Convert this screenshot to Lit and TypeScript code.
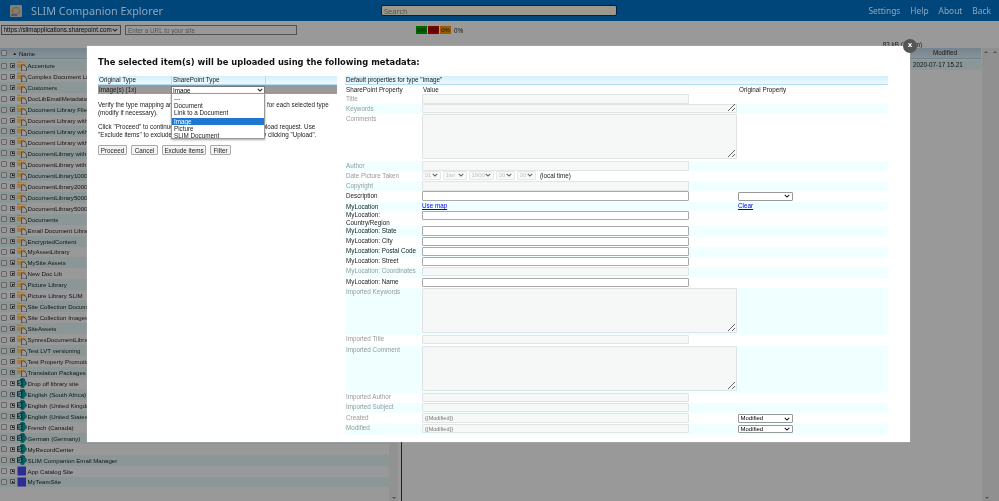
import { LitElement, html, css, svg } from "lit";
import { customElement } from "lit/decorators.js";

const FOLDERS = ["Accenture","Complex Document Library","Customers","DocLibEmailMetadata","Document Library File","Document Library with","Document Library with","Document Library with","DocumentLibrary with","DocumentLibrary with","DocumentLibrary1000","DocumentLibrary2000","DocumentLibrary5000","DocumentLibrary5000","Documents","Email Document Library","EncryptedContent","MyAssetLibrary","MySite Assets","New Doc Lib","Picture Library","Picture Library SLIM","Site Collection Documents","Site Collection Images","SiteAssets","SynresDocumentLibrary","Test LVT versioning","Test Property Promotion","Translation Packages"];
const SITES = ["Drop off library site","English (South Africa)","English (United Kingdom)","English (United States)","French (Canada)","German (Germany)","MyRecordCenter","SLIM Companion Email Manager"];
const BLUE = ["App Catalog Site","MyTeamSite"];

type Row = { l: string; h: number; k?: string; off?: boolean; orig?: string; v?: string; ih?: number };
const ROWS: Row[] = [
  { l: "Title", h: 10, k: "input", off: true },
  { l: "Keywords", h: 10, k: "area", off: true, ih: 9 },
  { l: "Comments", h: 47, k: "area", off: true, ih: 45 },
  { l: "Author", h: 10, k: "input", off: true },
  { l: "Date Picture Taken", h: 10, k: "date", off: true },
  { l: "Copyright", h: 10, k: "input", off: true },
  { l: "Description", h: 11, k: "input", orig: "" },
  { l: "MyLocation", h: 8.5, k: "map" },
  { l: "MyLocation:\nCountry/Region", h: 15.5, k: "input" },
  { l: "MyLocation: State", h: 10.5, k: "input" },
  { l: "MyLocation: City", h: 10.2, k: "input" },
  { l: "MyLocation: Postal Code", h: 10.3, k: "input" },
  { l: "MyLocation: Street", h: 10, k: "input" },
  { l: "MyLocation: Coordinates", h: 11, k: "input", off: true },
  { l: "MyLocation: Name", h: 10, k: "input" },
  { l: "Imported Keywords", h: 47, k: "area", off: true, ih: 45 },
  { l: "Imported Title", h: 11, k: "input", off: true },
  { l: "Imported Comment", h: 47, k: "area", off: true, ih: 45 },
  { l: "Imported Author", h: 10, k: "input", off: true },
  { l: "Imported Subject", h: 10.5, k: "input", off: true },
  { l: "Created", h: 10.5, k: "input", off: true, v: "{{Modified}}", orig: "Modified" },
  { l: "Modified", h: 11, k: "input", off: true, v: "{{Modified}}", orig: "Modified" },
];

const folderIcon = svg`<svg class="ico" viewBox="0 0 10 10"><path d="M0 .5h3.500l1 1H9V7H0z" fill="#a57c42"/><path d="M0 2.500h9" stroke="#b09a6c" stroke-width=".8"/><path d="M4.500 4H7l2.500 2.500V10h-5z" fill="#999" stroke="#333" stroke-width=".7"/></svg>`;
const siteIcon = svg`<svg class="ico" viewBox="0 0 10 10"><circle cx="5.500" cy="2.800" r="2.800" fill="#075356"/><circle cx="7.300" cy="5.300" r="2.500" fill="#0b6365"/><circle cx="5.500" cy="7.700" r="2.300" fill="#095c5e"/><rect x="0" y="2.200" width="5.500" height="5.600" fill="#023d40"/><text x="2.700" y="6.700" font-size="5" font-family="Liberation Sans" font-weight="700" text-anchor="middle" fill="#999">S</text></svg>`;
const blueIcon = svg`<svg class="ico" viewBox="0 0 10 10"><rect x=".5" y=".5" width="8.500" height="9" fill="#2d2d95"/></svg>`;

@customElement("app-root")
export class AppRoot extends LitElement {
  static styles = css`
    :host { display: block; position: relative; width: 999px; height: 501px; overflow: hidden; background: #999;
      font-family: "Liberation Sans", sans-serif; font-size: 6.300px; color: #222; }
    * { box-sizing: border-box; }
    select { appearance: none; line-height: 1; padding: 0 0 1px 1.500px;
      background: #fff url("data:image/svg+xml,%3Csvg xmlns='http://www.w3.org/2000/svg' viewBox='0 0 8 5'%3E%3Cpath d='M1 1l3 3 3-3' fill='none' stroke='%23222' stroke-width='1.400'/%3E%3C/svg%3E") no-repeat right 2px center / 6px 4px; }
    .page { height: 501px; background: #999; color: #141414; filter: blur(.25px); }
    .top { height: 21px; background: #00467a; display: flex; align-items: center; color: #8ea7bc; padding: 0 8px 0 10px; font-family: "Noto Sans", sans-serif; }
    .logo { width: 12px; height: 12px; margin-right: 9px; }
    .brand { font-size: 10.800px; width: 350px; }
    .search { width: 236px; height: 11px; background: #9c988c; border: 1px solid #002340; border-radius: 2px; font: inherit; font-size: 7.500px; padding: 0 2px; }
    .search::placeholder { color: #555; }
    .links { margin-left: auto; display: flex; gap: 10px; font-size: 8.400px; }
    .tools { height: 20px; display: flex; align-items: center; padding: 0 0 2px 1px; }
    .tools select { width: 120px; height: 10px; font: inherit; border: 1px solid #474747; color: #0a0a0a; background-color: #999; }
    .tools input { width: 172px; height: 10px; margin-left: 4px; font: inherit; padding: 0 2px; border: 1px solid #525252; background: #999; }
    .tools input::placeholder { color: #555; }
    .bars { margin-left: 119px; display: flex; gap: 1px; align-items: center; }
    .bar { width: 11px; height: 8px; text-align: center; line-height: 8px; font-size: 6px; color: #141414; }
    .g { background: #006600; } .r { background: #7d0000; } .o { background: #995c00; }
    .pct { margin-left: 2px; }
    .size { height: 7px; line-height: 7px; text-align: right; padding-right: 77px; }
    .panes { display: flex; height: 453px; }
    .tree { width: 389px; font-size: 6.100px; }
    .thead { height: 11px; display: flex; align-items: center; background: linear-gradient(#76848e, #899296); border-bottom: 1px solid #6e8290; }
    .rows { padding-top: 1.300px; }
    .row { height: 10.955px; display: flex; align-items: center; white-space: nowrap; }
    .row:nth-child(odd) { background: #8b9696; }
    .cb { width: 6px; height: 6px; margin-left: 1px; border: 1px solid #666; border-radius: 1px; background: #999; flex: none; }
    .exp { width: 5px; height: 5px; margin-left: 3px; border: 1px solid #525252; position: relative; flex: none; background: #999; }
    .exp::before { content: ""; position: absolute; left: .5px; right: .5px; top: 1.100px; height: 1px; background: #1f1f1f; }
    .exp::after { content: ""; position: absolute; top: .5px; bottom: .5px; left: 1.100px; width: 1px; background: #1f1f1f; }
    .ico { width: 10px; height: 10px; margin: 0 .5px 0 2px; flex: none; }
    .sort { margin: 0 2px 0 5.500px; font-size: 4.500px; }
    .scroll { width: 9px; background: #929292; position: relative; }
    .arrow { position: absolute; bottom: 2px; left: 3px; width: 0; height: 0; border: 2px solid transparent; border-top-color: #525252; border-bottom: 0; }
    .split { width: 4px; border-right: 1.500px solid #1f1f1f; }
    .main { flex: 1; }
    .mhead { margin-left: 507px; width: 72px; height: 11px; background: linear-gradient(#76848e, #899296); border-bottom: 1px solid #6e8290; text-align: center; line-height: 10px; }
    .mrow { margin: 1.300px 0 0 507px; width: 72px; height: 10px; background: #8b9696; padding-left: 4px; line-height: 10px; }
    .side { width: 17px; background: #909090; position: relative; }
    .up { position: absolute; top: 3px; width: 0; height: 0; border: 2px solid transparent; border-bottom-color: #525252; border-top: 0; }
    .modal { position: absolute; left: 87px; top: 45.500px; width: 823px; height: 396px; background: #fff; box-shadow: 0 0 1px #ccc; padding: 11px 22px 0 11px; filter: blur(.25px); }
    h1 { margin: 0; font: 700 8.350px/11px "DejaVu Sans", sans-serif; height: 19.500px; white-space: nowrap; color: #111; }
    .close { position: absolute; right: -7px; top: -7px; width: 14px; height: 14px; border-radius: 50%; background: #555; color: #fff; font: 700 7px/13px "DejaVu Sans", sans-serif; text-align: center; }
    .cols { display: flex; gap: 8px; }
    .left { width: 239px; }
    .right { flex: 1; }
    .hd { height: 9px; line-height: 8px; background: linear-gradient(#d4effb, #ecf9fe); border-bottom: 1px solid #b4def6; padding-left: 1px; white-space: nowrap; }
    .lgrid { display: grid; grid-template-columns: 73px 94px 72px; }
    .lgrid .hd + .hd { border-left: 1px solid #b4def6; }
    .gray { background: #999; height: 9px; line-height: 9px; padding-left: 1px; display: flex; align-items: center; }
    .typecell { position: relative; padding-left: 0; }
    .typecell select { width: 94px; height: 8px; font: inherit; border: 0; padding: 0 0 0 2px; box-shadow: inset 0 0 0 1px #777; }
    .list { position: absolute; left: 0; top: 8px; width: 94px; height: 46px; background: #fff; border: 1px solid #999; box-shadow: 0 1px 2px #00000059; padding-top: .5px; color: #222; z-index: 2; }
    .opt { height: 7.400px; line-height: 7.400px; padding-left: 2px; white-space: nowrap; }
    .opt.sep { margin-bottom: 1px; }
    .opt.sel { background: #1e78d2; color: #fff; }
    .note { margin: 7px 0 6px; line-height: 8px; white-space: nowrap; }
    .note p { margin: 0 0 6px; }
    .btns { display: flex; gap: 4px; margin-top: 1px; }
    button { height: 10px; padding: 0; font: inherit; border: 1px solid #aaa; border-radius: 1px; background: #f4f4f4; color: #222; white-space: nowrap; }
    .b1 { width: 29px; } .b2 { width: 27px; } .b3 { width: 44px; } .b4 { width: 21px; }
    .phead { display: grid; grid-template-columns: 77px 316px 1fr; height: 9px; line-height: 9px; padding-left: 1px; }
    .prow { display: grid; grid-template-columns: 77px 316px 1fr; align-items: start; }
    .prow:nth-child(even) { background: #f0ffff; }
    .lab { padding-left: 1px; line-height: 7.500px; padding-top: .5px; white-space: pre; }
    .lab.off { color: #999; }
    .prow input { display: block; width: 267px; height: 9.500px; font: inherit; font-size: 5.500px; padding: 0 2px; border: 1px solid #aaa; background: #fff; border-radius: 1px; }
    .prow input:disabled { background: #f6f7f7; border-color: #e2e4e4; color: #777; }
    .prow textarea { display: block; width: 315px; padding: 0; border: 1px solid #e0e3e3; background: #f6f7f7; border-radius: 1px; }
    .prow select { width: 55px; height: 8.500px; font: inherit; font-size: 6px; border: 1px solid #999; border-radius: 1px; display: block; margin-top: 1px; }
    .date { display: flex; gap: 2px; align-items: center; }
    .date select { margin-top: 0; border-color: #ddd; color: #aaa; background-color: #f6f6f6; }
    .s1 { width: 19px !important; } .s2 { width: 24px !important; } .s3 { width: 25px !important; }
    .date span { margin-left: 2px; }
    a { color: #00e; text-decoration: underline; line-height: 8px; display: block; }
  `;

  private cell(r: Row) {
    if (r.k === "input") return html`<input ?disabled=${r.off} .value=${r.v ?? ""} />`;
    if (r.k === "area") return html`<textarea disabled style="height:${r.ih}px"></textarea>`;
    if (r.k === "map") return html`<a>Use map</a>`;
    return html`<div class="date">
      <select disabled class="s1"><option>01</option></select>
      <select disabled class="s2"><option>Jan</option></select>
      <select disabled class="s3"><option>1900</option></select>
      <select disabled class="s1"><option>00</option></select>
      <select disabled class="s1"><option>00</option></select>
      <span>(local time)</span></div>`;
  }

  private orig(r: Row) {
    if (r.k === "map") return html`<a>Clear</a>`;
    if (r.orig === undefined) return "";
    return html`<select><option>${r.orig}</option></select>`;
  }

  render() {
    const tree = [
      ...FOLDERS.map((n) => [n, folderIcon] as const),
      ...SITES.map((n) => [n, siteIcon] as const),
      ...BLUE.map((n) => [n, blueIcon] as const),
    ];
    return html`
      <div class="page">
        <div class="top">
          <svg class="logo" viewBox="0 0 12 12"><rect width="12" height="12" rx="1" fill="#7c8083"/><circle cx="6" cy="6" r="3.500" fill="none" stroke="#8b6b23" stroke-width="1.500"/><path d="M1 9h6v2H1z" fill="#535a60"/></svg>
          <div class="brand">SLIM Companion Explorer</div>
          <input class="search" placeholder="Search" />
          <div class="links"><span>Settings</span><span>Help</span><span>About</span><span>Back</span></div>
        </div>
        <div class="tools">
          <select><option>https://slimapplications.sharepoint.com</option></select>
          <input placeholder="Enter a URL to your site" />
          <div class="bars"><div class="bar g">0%</div><div class="bar r">0%</div><div class="bar o">0%</div><div class="pct">0%</div></div>
        </div>
        <div class="size">83 kB (1 item)</div>
        <div class="panes">
          <div class="tree">
            <div class="thead"><div class="cb"></div><span class="sort">▲</span>Name</div>
            <div class="rows">
              ${tree.map(([n, ic]) => html`<div class="row"><div class="cb"></div><div class="exp"></div>${ic}<span>${n}</span></div>`)}
            </div>
          </div>
          <div class="scroll"><div class="arrow"></div></div>
          <div class="split"></div>
          <div class="main">
            <div class="mhead">Modified</div>
            <div class="mrow">2020-07-17 15.21</div>
          </div>
          <div class="side"><div class="up" style="left:2px"></div><div class="up" style="left:11px"></div><div class="arrow"></div></div>
        </div>
      </div>
      <div class="modal">
        <div class="close">x</div>
        <h1>The selected item(s) will be uploaded using the following metadata:</h1>
        <div class="cols">
          <div class="left">
            <div class="lgrid">
              <div class="hd">Original Type</div><div class="hd">SharePoint Type</div><div class="hd"></div>
              <div class="gray">Image(s) (1x)</div>
              <div class="gray typecell">
                <select><option>Image</option></select>
                <div class="list">
                  <div class="opt">---</div>
                  <div class="opt">Document</div>
                  <div class="opt sep">Link to a Document</div>
                  <div class="opt sel">Image</div>
                  <div class="opt">Picture</div>
                  <div class="opt">SLIM Document</div>
                </div>
              </div>
              <div class="gray"></div>
            </div>
            <div class="note">
              <p>Verify the type mapping and also the default property values for each selected type<br />(modify if necessary).</p>
              <p>Click "Proceed" to continue and then create or review the upload request. Use<br />"Exclude items" to exclude items from the list, or continue by clicking "Upload".</p>
            </div>
            <div class="btns"><button class="b1">Proceed</button><button class="b2">Cancel</button><button class="b3">Exclude items</button><button class="b4">Filter</button></div>
          </div>
          <div class="right">
            <div class="hd">Default properties for type "Image"</div>
            <div class="phead"><span>SharePoint Property</span><span>Value</span><span>Original Property</span></div>
            <div>
              ${ROWS.map((r) => html`<div class="prow" style="height:${r.h}px">
                <div class="lab ${r.off ? "off" : ""}">${r.l}</div>
                <div>${this.cell(r)}</div>
                <div>${this.orig(r)}</div>
              </div>`)}
            </div>
          </div>
        </div>
      </div>
    `;
  }
}
